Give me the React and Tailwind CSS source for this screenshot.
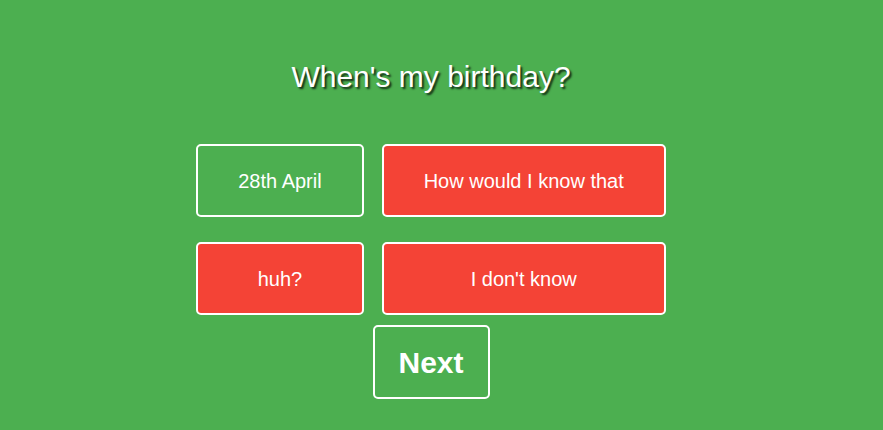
import React, { useState } from "react";

const answers = [
  { text: "28th April", correct: true },
  { text: "How would I know that", correct: false },
  { text: "huh?", correct: false },
  { text: "I don't know", correct: false },
];

export default function App() {
  const [picked, setPicked] = useState(null);

  return (
    <div className="min-h-[430px] w-full bg-[#4caf50] font-['Liberation_Sans',Arial,sans-serif] text-white">
      <div className="flex w-[862px] flex-col items-center pt-[57px]">
        {/* Question */}
        <h1 className="text-[30px] leading-[40px] [text-shadow:2px_2px_2px_rgba(0,0,0,0.75)]">
          When's my birthday?
        </h1>

        {/* Answers */}
        <div className="mt-[47px] grid grid-cols-[auto_auto] gap-x-[18px] gap-y-[25px]">
          {answers.map((a) => (
            <button
              key={a.text}
              onClick={() => setPicked(a.text)}
              className={`h-[73px] rounded-[5px] border-2 border-white px-[40px] text-[20px] ${
                a.correct ? "bg-[#4caf50]" : "bg-[#f44336]"
              }`}
            >
              {a.text}
            </button>
          ))}
        </div>

        {/* Next */}
        <button className="mt-[10px] h-[74px] w-[117px] rounded-[5px] border-2 border-white text-[30px] font-bold">
          Next
        </button>
      </div>
    </div>
  );
}
